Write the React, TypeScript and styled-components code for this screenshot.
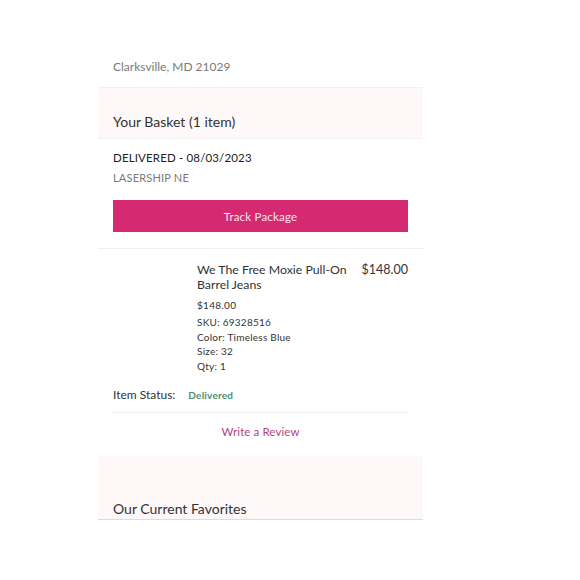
import React from 'react';
import styled, {createGlobalStyle} from 'styled-components';

const GlobalStyle = createGlobalStyle`
  body {
    margin: 0;
    background: #fff;
    font-family: Lato, "Open Sans", sans-serif;
    color: #333;
  }
`

const item = {
  name: 'We The Free Moxie Pull-On Barrel Jeans',
  price: '$148.00',
  details: ['SKU: 69328516', 'Color: Timeless Blue', 'Size: 32', 'Qty: 1'],
}

export default function App() {
  return (
    <>
      <GlobalStyle/>
      <Page>
        <Address>Clarksville, MD 21029</Address>
        <Band $top={24} $bottom={6}>
          <BandTitle>Your Basket (1 item)</BandTitle>
        </Band>
        <Delivery>
          <DeliveredLine>DELIVERED - 08/03/2023</DeliveredLine>
          <Carrier>LASERSHIP NE</Carrier>
          <TrackButton>Track Package</TrackButton>
        </Delivery>
        <ItemSection>
          <ItemRow>
            <ImageSlot/>
            <Details>
              <ItemName>{item.name}</ItemName>
              <SmallPrice>{item.price}</SmallPrice>
              {item.details.map(d => <Detail key={d}>{d}</Detail>)}
            </Details>
            <LinePrice>{item.price}</LinePrice>
          </ItemRow>
          <StatusRow>
            <StatusLabel>Item Status:</StatusLabel>
            <StatusValue>Delivered</StatusValue>
          </StatusRow>
          <ReviewLink>Write a Review</ReviewLink>
        </ItemSection>
        <Band $top={43} $bottom={0} $border>
          <BandTitle>Our Current Favorites</BandTitle>
        </Band>
      </Page>
    </>
  );
}

const Page = styled.div`
  width: 325px;
  margin-left: 98px;
  display: flex;
  flex-direction: column;
`
const Address = styled.div`
  padding: 59px 15px 12px;
  font-size: 12px;
  line-height: 16px;
  color: #7a7a7a;
  border-bottom: 1px solid #f6f1f0;
`
const Band = styled.div<{ $top: number; $bottom: number; $border?: boolean }>`
  background: #fef9f8;
  padding: ${p => p.$top}px 15px ${p => p.$bottom}px;
  border-bottom: 1px solid ${p => p.$border ? '#dcdcdc' : '#f6f1f0'};
`
const BandTitle = styled.div`
  font-size: 14px;
  line-height: 20px;
  color: #333;
`
const Delivery = styled.div`
  padding: 11px 15px 16px;
  border-bottom: 1px solid #f1eeee;
  display: flex;
  flex-direction: column;
`
const DeliveredLine = styled.div`
  font-size: 11.5px;
  line-height: 16px;
  letter-spacing: 0.15px;
  color: #222;
`
const Carrier = styled.div`
  margin-top: 4px;
  font-size: 11px;
  line-height: 16px;
  letter-spacing: 0.2px;
  color: #7a7a7a;
`
const TrackButton = styled.button`
  margin-top: 14px;
  height: 32px;
  border: none;
  background: #d52a71;
  color: #fbe3ee;
  font-family: Lato, sans-serif;
  font-size: 11.5px;
  letter-spacing: 0.2px;
`
const ItemSection = styled.div`
  padding: 0 15px 16px;
  display: flex;
  flex-direction: column;
`
const ItemRow = styled.div`
  display: grid;
  grid-template-columns: 72px 1fr auto;
  column-gap: 12px;
  padding-top: 13px;
`
const ImageSlot = styled.div`
  height: 100px;
`
const Details = styled.div`
  display: flex;
  flex-direction: column;
`
const ItemName = styled.div`
  font-size: 12.3px;
  line-height: 15px;
  color: #333;
`
const SmallPrice = styled.div`
  margin: 6px 0 3px;
  font-size: 10px;
  line-height: 14px;
  letter-spacing: 0.3px;
  color: #333;
`
const Detail = styled.div`
  font-size: 10px;
  line-height: 14.7px;
  letter-spacing: 0.25px;
  color: #333;
`
const LinePrice = styled.div`
  font-size: 12.5px;
  line-height: 15px;
  color: #333;
`
const StatusRow = styled.div`
  display: flex;
  align-items: center;
  gap: 13px;
  margin-top: 13px;
  padding-bottom: 9px;
  border-bottom: 1px solid #f1eeee;
`
const StatusLabel = styled.span`
  font-size: 12px;
  line-height: 16px;
  color: #333;
`
const StatusValue = styled.span`
  font-size: 10px;
  line-height: 16px;
  letter-spacing: 0.2px;
  font-weight: 700;
  color: #4b8d74;
`
const ReviewLink = styled.a`
  margin-top: 11px;
  align-self: center;
  font-size: 11.5px;
  line-height: 16px;
  letter-spacing: 0.1px;
  color: #b1447f;
`
